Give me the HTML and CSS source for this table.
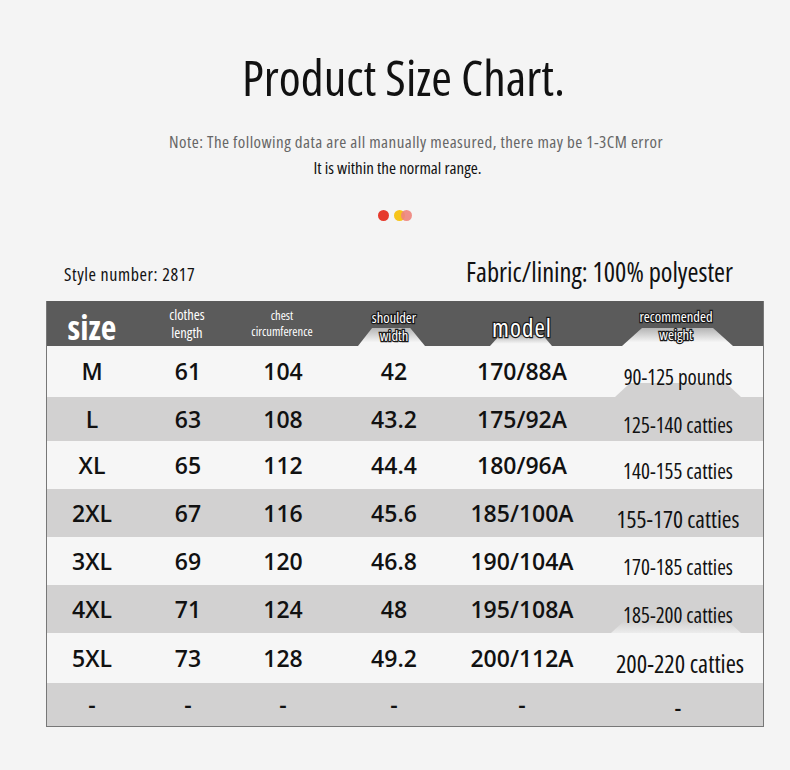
FILE: index.html
```html
<!DOCTYPE html>
<html lang="en">
<head>
<meta charset="utf-8">
<title>Product Size Chart</title>
<link rel="stylesheet" href="styles.css">
</head>
<body>
<div class="page">
  <h1 class="title">Product Size Chart.</h1>
  <p class="note">Note: The following data are all manually measured, there may be 1-3CM error</p>
  <p class="note2">It is within the normal range.</p>
  <div class="dots"><span class="dot red"></span><span class="dot yellow"></span><span class="dot pink"></span></div>
  <div class="meta">
    <span class="style-no">Style number: 2817</span>
    <span class="fabric">Fabric/lining: 100% polyester</span>
  </div>
  <div class="chart">
    <div class="hd c-size">size</div>
    <div class="hd c-small">clothes<br>length</div>
    <div class="hd c-tiny">chest<br>circumference</div>
    <div class="hd c-out"><span class="glow g1"></span><span class="lbl">shoulder<br>width</span></div>
    <div class="hd c-model"><span class="glow g2"></span><span class="lbl">model</span></div>
    <div class="hd c-out c-rec"><span class="glow g3"></span><span class="lbl">recommended<br>weight</span></div>

    <div class="cell w">M</div><div class="cell w">61</div><div class="cell w">104</div><div class="cell w">42</div><div class="cell w">170/88A</div><div class="cell w wt tab-gray"><span class="txt">90-125 pounds</span></div>
    <div class="cell g">L</div><div class="cell g">63</div><div class="cell g">108</div><div class="cell g">43.2</div><div class="cell g">175/92A</div><div class="cell g wt"><span class="txt">125-140 catties</span></div>
    <div class="cell w">XL</div><div class="cell w">65</div><div class="cell w">112</div><div class="cell w">44.4</div><div class="cell w">180/96A</div><div class="cell w wt"><span class="txt">140-155 catties</span></div>
    <div class="cell g">2XL</div><div class="cell g">67</div><div class="cell g">116</div><div class="cell g">45.6</div><div class="cell g">185/100A</div><div class="cell g wt big"><span class="txt">155-170 catties</span></div>
    <div class="cell w">3XL</div><div class="cell w">69</div><div class="cell w">120</div><div class="cell w">46.8</div><div class="cell w">190/104A</div><div class="cell w wt"><span class="txt">170-185 catties</span></div>
    <div class="cell g">4XL</div><div class="cell g">71</div><div class="cell g">124</div><div class="cell g">48</div><div class="cell g">195/108A</div><div class="cell g wt tab-light"><span class="txt">185-200 catties</span></div>
    <div class="cell w">5XL</div><div class="cell w">73</div><div class="cell w">128</div><div class="cell w">49.2</div><div class="cell w">200/112A</div><div class="cell w wt bigger"><span class="txt">200-220 catties</span></div>
    <div class="cell g">-</div><div class="cell g">-</div><div class="cell g">-</div><div class="cell g">-</div><div class="cell g">-</div><div class="cell g wt dash">-</div>
  </div>
</div>
</body>
</html>
```
FILE: styles.css
```css
* { box-sizing: border-box; margin: 0; padding: 0; }
html, body { background: #f4f4f4; }
body { margin: 0; font-family: "Open Sans", "DejaVu Sans Condensed", sans-serif; font-stretch: 75%; color: #111; }
.page { width: 790px; height: 770px; padding-top: 49px; display: flex; flex-direction: column; align-items: center; }
.title { font-size: 50px; font-weight: 500; line-height: 56px; color: #111; margin-left: 17px; }
.note { margin-top: 27px; margin-left: 42px; font-size: 17px; line-height: 20px; color: #666; font-weight: 500; letter-spacing: 0.45px; }
.note2 { margin-top: 6px; margin-left: 5px; font-size: 17px; line-height: 20px; color: #111; font-weight: 500; }
.dots { margin-top: 32px; height: 11px; display: flex; margin-left: 0; }
.dot { width: 11px; height: 11px; border-radius: 50%; }
.red { background: #e63a2c; margin-right: 5px; }
.yellow { background: #f6c41a; }
.pink { background: rgba(238, 132, 124, 0.9); margin-left: -4px; }
.meta { width: 790px; margin-top: 36px; padding: 0 57px 0 64px; display: flex; justify-content: space-between; align-items: flex-end; }
.style-no { font-size: 18px; line-height: 22px; font-weight: 500; margin-bottom: 2px; letter-spacing: 0.6px; }
.fabric { font-size: 26.5px; line-height: 30px; font-weight: 500; }
.chart { align-self: flex-start; margin-left: 46px; margin-top: 14px; width: 718px; border: 1px solid #777; border-top: 0; display: grid;
  grid-template-columns: 90px 102px 88px 134px 122px 180px;
  grid-template-rows: 45px 51px 44px 48px 48px 48px 48px 50px 43px; }
.hd { background: #5b5b5b; color: #fff; display: flex; align-items: center; justify-content: center; text-align: center; position: relative; }
.c-size { font-size: 34px; font-weight: 700; line-height: 38px; align-items: flex-end; padding-bottom: 0; }
.c-small { font-size: 14.5px; line-height: 18px; padding-right: 2px; }
.c-tiny { font-size: 12.5px; line-height: 16px; padding-top: 1px; padding-right: 2px; }
.c-out { font-size: 14.5px; line-height: 18px; font-weight: 500; padding-top: 6px; }
.c-rec { font-size: 14.5px; padding-left: 6px; padding-top: 4px; }
.c-model { font-size: 25px; line-height: 30px; font-weight: 500; padding-top: 6px; letter-spacing: 1px; }
.lbl { position: relative; -webkit-text-stroke: 2.4px #1a1a1a; paint-order: stroke fill; color: #fff; }
.glow { position: absolute; bottom: 0; background: linear-gradient(#b4b4b4, #f6f6f6 80%); }
.g1 { left: 31px; width: 67px; height: 18px; clip-path: polygon(21% 0, 78% 0, 100% 100%, 0 100%); }
.g2 { left: 29px; width: 62px; height: 11px; clip-path: polygon(16% 0, 85% 0, 100% 100%, 0 100%); }
.g3 { left: 39px; width: 111px; height: 18px; clip-path: polygon(18% 0, 82% 0, 100% 100%, 0 100%); }
.cell { display: flex; align-items: center; justify-content: center; font-size: 23px; font-stretch: 100%; font-weight: 600; color: #111; padding-bottom: 1px; position: relative; }
.w { background: #f6f6f6; }
.g { background: #d2d1d1; }
.wt { font-size: 21px; font-stretch: 75%; font-weight: 500; padding-left: 10px; padding-top: 12px; }
.wt .txt { position: relative; }
.big { font-size: 23.5px; }
.bigger { font-size: 24.5px; padding-left: 14px; }
.dash { padding-top: 8px; font-weight: 600; font-stretch: 100%; }
.tab-gray::before { content: ""; position: absolute; bottom: 0; left: 32px; width: 126px; height: 14px;
  background: #d2d1d1; border-radius: 14px 14px 0 0; clip-path: polygon(12% 0, 88% 0, 100% 100%, 0 100%); }
.tab-light::before { content: ""; position: absolute; bottom: 0; left: 28px; width: 130px; height: 12px;
  background: linear-gradient(#d2d1d1, #ececec); border-radius: 14px 14px 0 0; clip-path: polygon(10% 0, 90% 0, 100% 100%, 0 100%); }
```
